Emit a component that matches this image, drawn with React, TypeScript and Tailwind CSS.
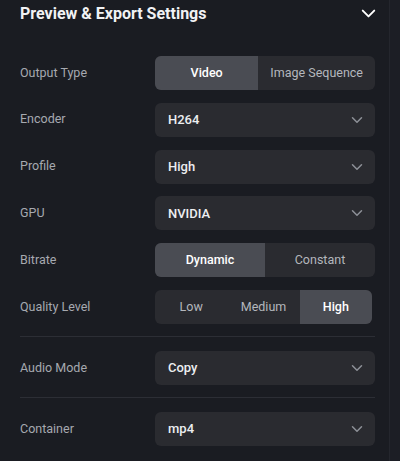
import { ChevronDown } from "lucide-react";

const font = { fontFamily: "Roboto, 'Noto Sans', sans-serif" };

function Segmented({ options, active, wide = true }: { options: string[]; active: number; wide?: boolean }) {
  return (
    <div className={`flex h-[34px] rounded-md bg-[#2a2b30] overflow-hidden ${wide ? "w-[220px]" : "w-[217px]"}`}>
      {options.map((o, i) => (
        <div
          key={o}
          className={`flex-1 px-3 flex items-center justify-center whitespace-nowrap text-[12.5px] ${
            i === active ? "bg-[#4a4c53] text-white font-medium" : "text-[#b4b7bd]"
          }`}
        >
          {o}
        </div>
      ))}
    </div>
  );
}

function Select({ value }: { value: string }) {
  return (
    <div className="flex h-[34px] w-[220px] items-center justify-between rounded-md bg-[#2a2b30] pl-[13px] pr-[9px]">
      <span className="text-[13px] font-medium text-[#eceef1]">{value}</span>
      <ChevronDown size={18} strokeWidth={2} className="text-[#8d9097]" />
    </div>
  );
}

function Row({ label, children }: { label: string; children: React.ReactNode }) {
  return (
    <div className="flex items-center justify-between">
      <span className="text-[12.5px] text-[#a6a9b0]">{label}</span>
      {children}
    </div>
  );
}

export default function App() {
  return (
    <div className="flex h-[461px] w-[400px] bg-[#1a1c22]" style={font}>
      <div className="flex-1 border-r border-[#24262d] pl-5 pr-[14px]">
        <div className="flex items-center justify-between pt-[1px] h-[26px]">
          <h2 className="text-[16px] font-bold text-[#f1f2f4]">Preview &amp; Export Settings</h2>
          <ChevronDown size={23} strokeWidth={2} className="-mr-[5px] text-white" />
        </div>
        <div className="mt-[30px] flex flex-col gap-[12.8px]">
          <Row label="Output Type">
            <Segmented options={["Video", "Image Sequence"]} active={0} />
          </Row>
          <Row label="Encoder">
            <Select value="H264" />
          </Row>
          <Row label="Profile">
            <Select value="High" />
          </Row>
          <Row label="GPU">
            <Select value="NVIDIA" />
          </Row>
          <Row label="Bitrate">
            <Segmented options={["Dynamic", "Constant"]} active={0} />
          </Row>
          <div className="flex items-center">
            <span className="w-[135px] text-[12.5px] text-[#a6a9b0]">Quality Level</span>
            <Segmented options={["Low", "Medium", "High"]} active={2} wide={false} />
          </div>
        </div>
        <div className="mt-[12px] h-px bg-[#2c2e35]" />
        <div className="mt-[14px]">
          <Row label="Audio Mode">
            <Select value="Copy" />
          </Row>
        </div>
        <div className="mt-[12px] h-px bg-[#2c2e35]" />
        <div className="mt-[14px]">
          <Row label="Container">
            <Select value="mp4" />
          </Row>
        </div>
      </div>
      <div className="w-[10px] bg-[#1c1e25]" />
    </div>
  );
}
